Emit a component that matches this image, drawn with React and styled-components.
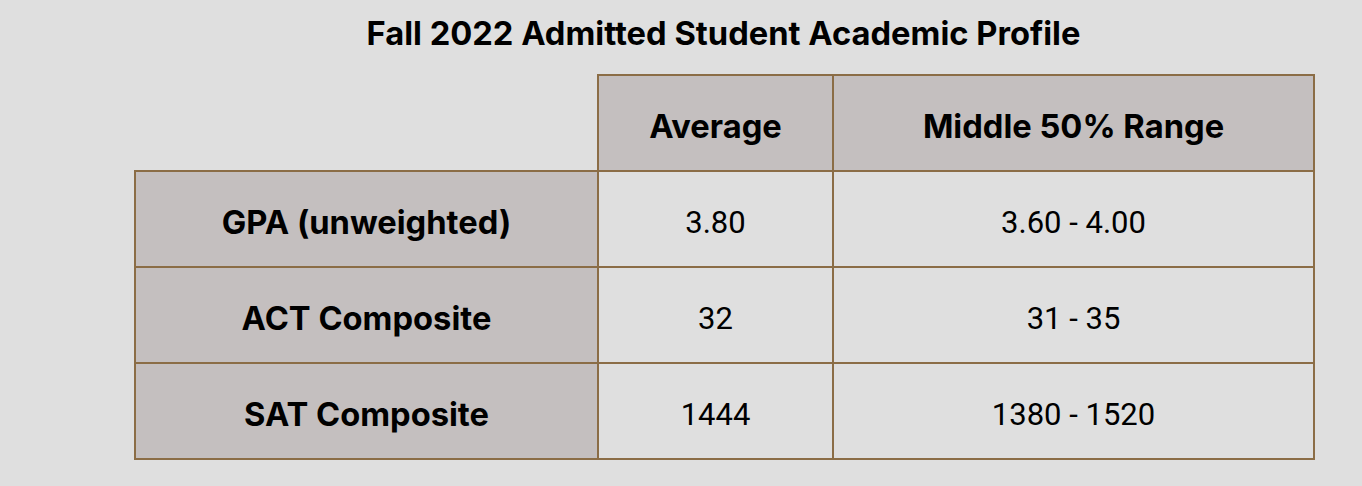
import styled, { createGlobalStyle } from 'styled-components';

const GlobalStyle = createGlobalStyle`
  html, body {
    margin: 0;
    padding: 0;
    background-color: #dfdfdf;
  }
  body {
    font-family: Roboto, "Liberation Sans", Arial, sans-serif;
    color: #000000;
  }
`;

const Page = styled.div`
  width: 1362px;
  height: 486px;
  padding: 11px 49px 0 134px;
  box-sizing: border-box;
`;

const Title = styled.h2`
  margin: 0 0 19px 0;
  text-align: center;
  font-family: Inter, Roboto, sans-serif;
  font-size: 32.7px;
  font-weight: 700;
  line-height: 44px;
`;

const Table = styled.table`
  border-collapse: collapse;
  width: 1179px;
  table-layout: fixed;
`;

const Col = styled.col`
  width: ${(p) => p.$w}px;
`;

const Row = styled.tr`
  height: 96px;
`;

const Blank = styled.td`
  border: none;
  background: transparent;
`;

const HeadCell = styled.th`
  border: 2px solid #8b6d46;
  background-color: #c4bfbf;
  font-family: Inter, Roboto, sans-serif;
  font-size: 32.7px;
  font-weight: 700;
  text-align: center;
  padding: 6px 0 0 0;
`;

const Cell = styled.td`
  border: 2px solid #8b6d46;
  background-color: #dfdfdf;
  font-size: 31px;
  font-weight: 400;
  text-align: center;
  padding: 6px 0 0 0;
`;

const rows = [
  { label: 'GPA (unweighted)', avg: '3.80', range: '3.60 - 4.00' },
  { label: 'ACT Composite', avg: '32', range: '31 - 35' },
  { label: 'SAT Composite', avg: '1444', range: '1380 - 1520' },
];

function App() {
  return (
    <Page>
      <GlobalStyle />
      <Title>Fall 2022 Admitted Student Academic Profile</Title>
      <Table>
        <colgroup>
          <Col $w={463} />
          <Col $w={235} />
          <Col $w={481} />
        </colgroup>
        <tbody>
          <Row>
            <Blank />
            <HeadCell>Average</HeadCell>
            <HeadCell>Middle 50% Range</HeadCell>
          </Row>
          {rows.map((r) => (
            <Row key={r.label}>
              <HeadCell scope="row">{r.label}</HeadCell>
              <Cell>{r.avg}</Cell>
              <Cell>{r.range}</Cell>
            </Row>
          ))}
        </tbody>
      </Table>
    </Page>
  );
}

export default App;
